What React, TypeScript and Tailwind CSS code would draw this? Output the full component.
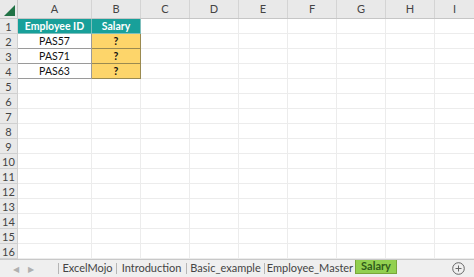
import React from "react";

const cols = [
  { l: "A", w: 74 },
  { l: "B", w: 49 },
  { l: "C", w: 49 },
  { l: "D", w: 49 },
  { l: "E", w: 49 },
  { l: "F", w: 49 },
  { l: "G", w: 49 },
  { l: "H", w: 49 },
  { l: "I", w: 40 },
];

const data: Record<number, [string, string]> = {
  1: ["Employee ID", "Salary"],
  2: ["PAS57", "?"],
  3: ["PAS71", "?"],
  4: ["PAS63", "?"],
};

export default function App() {
  const rows = Array.from({ length: 16 }, (_, i) => i + 1);
  return (
    <div
      className="w-[474px] h-[277px] overflow-hidden bg-white flex flex-col"
      style={{ fontFamily: "Lato, 'Open Sans', sans-serif" }}
    >
      {/* column header */}
      <div className="flex h-[19px] bg-[#e9e9e9] border-b border-[#c6c6c6] shrink-0">
        <div className="w-[18px] shrink-0 border-r border-[#c6c6c6] relative">
          <svg className="absolute right-[2px] bottom-[2px]" width="11" height="11" viewBox="0 0 11 11">
            <polygon points="11,0 11,11 0,11" fill="#217346" />
          </svg>
        </div>
        {cols.map((c) => (
          <div
            key={c.l}
            className="shrink-0 border-r border-[#d4d4d4] flex items-center justify-center text-[11px] text-[#444]"
            style={{ width: c.w }}
          >
            {c.l}
          </div>
        ))}
      </div>
      {/* rows */}
      <div className="flex-1 flex flex-col">
        {rows.map((r) => (
          <div key={r} className="flex h-[15px] shrink-0">
            <div className="w-[18px] shrink-0 bg-[#e9e9e9] border-r border-b border-[#d0d0d0] flex items-center justify-center text-[11px] text-[#444] leading-none">
              {r}
            </div>
            {cols.map((c, ci) => {
              const d = data[r];
              if (d && ci === 0) {
                return (
                  <div
                    key={c.l}
                    className={
                      "shrink-0 flex items-center justify-center text-[10.5px] leading-none border-r border-b " +
                      (r === 1
                        ? "bg-[#18a09a] text-white font-bold border-[#7fbfbc]"
                        : "bg-white text-[#111] border-[#9a9a9a]")
                    }
                    style={{ width: c.w }}
                  >
                    {d[0]}
                  </div>
                );
              }
              if (d && ci === 1) {
                return (
                  <div
                    key={c.l}
                    className={
                      "shrink-0 flex items-center justify-center text-[10.5px] leading-none font-bold border-r border-b " +
                      (r === 1
                        ? "bg-[#18a09a] text-white border-[#7fbfbc]"
                        : "bg-[#fdd56a] text-[#111] border-[#9a8a50]")
                    }
                    style={{ width: c.w }}
                  >
                    {d[1]}
                  </div>
                );
              }
              return (
                <div
                  key={c.l}
                  className="shrink-0 border-r border-b border-[#ececec]"
                  style={{ width: c.w }}
                />
              );
            })}
          </div>
        ))}
      </div>
      {/* tab bar */}
      <div className="h-[18px] shrink-0 bg-[#efefef] border-t border-[#c8c8c8] flex items-stretch text-[11px] text-[#444]">
        <div className="w-[58px] shrink-0 flex items-center gap-[9px] pl-[13px] text-[#b0b0b0] text-[8px]">
          <span>◀</span>
          <span>▶</span>
        </div>
        <div className="w-px my-[3px] bg-[#b5b5b5]" />
        <div className="w-[57px] flex items-center justify-center">ExcelMojo</div>
        <div className="w-px my-[3px] bg-[#b5b5b5]" />
        <div className="w-[69px] flex items-center justify-center">Introduction</div>
        <div className="w-px my-[3px] bg-[#b5b5b5]" />
        <div className="w-[77px] flex items-center justify-center">Basic_example</div>
        <div className="w-px my-[3px] bg-[#b5b5b5]" />
        <div className="w-[90px] flex items-center justify-center">Employee_Master</div>
        <div className="w-[42px] mb-[3px] bg-[#92d050] flex items-center justify-center font-bold text-[#2f5b1a] border-x border-b border-[#7aa63a]">
          Salary
        </div>
        <div className="flex-1 flex items-center justify-end pr-[9px]">
          <svg width="13" height="13" viewBox="0 0 13 13">
            <circle cx="6.5" cy="6.5" r="5.8" fill="none" stroke="#666" strokeWidth="1" />
            <path d="M6.5 3.5v6M3.5 6.5h6" stroke="#666" strokeWidth="1" />
          </svg>
        </div>
      </div>
    </div>
  );
}
